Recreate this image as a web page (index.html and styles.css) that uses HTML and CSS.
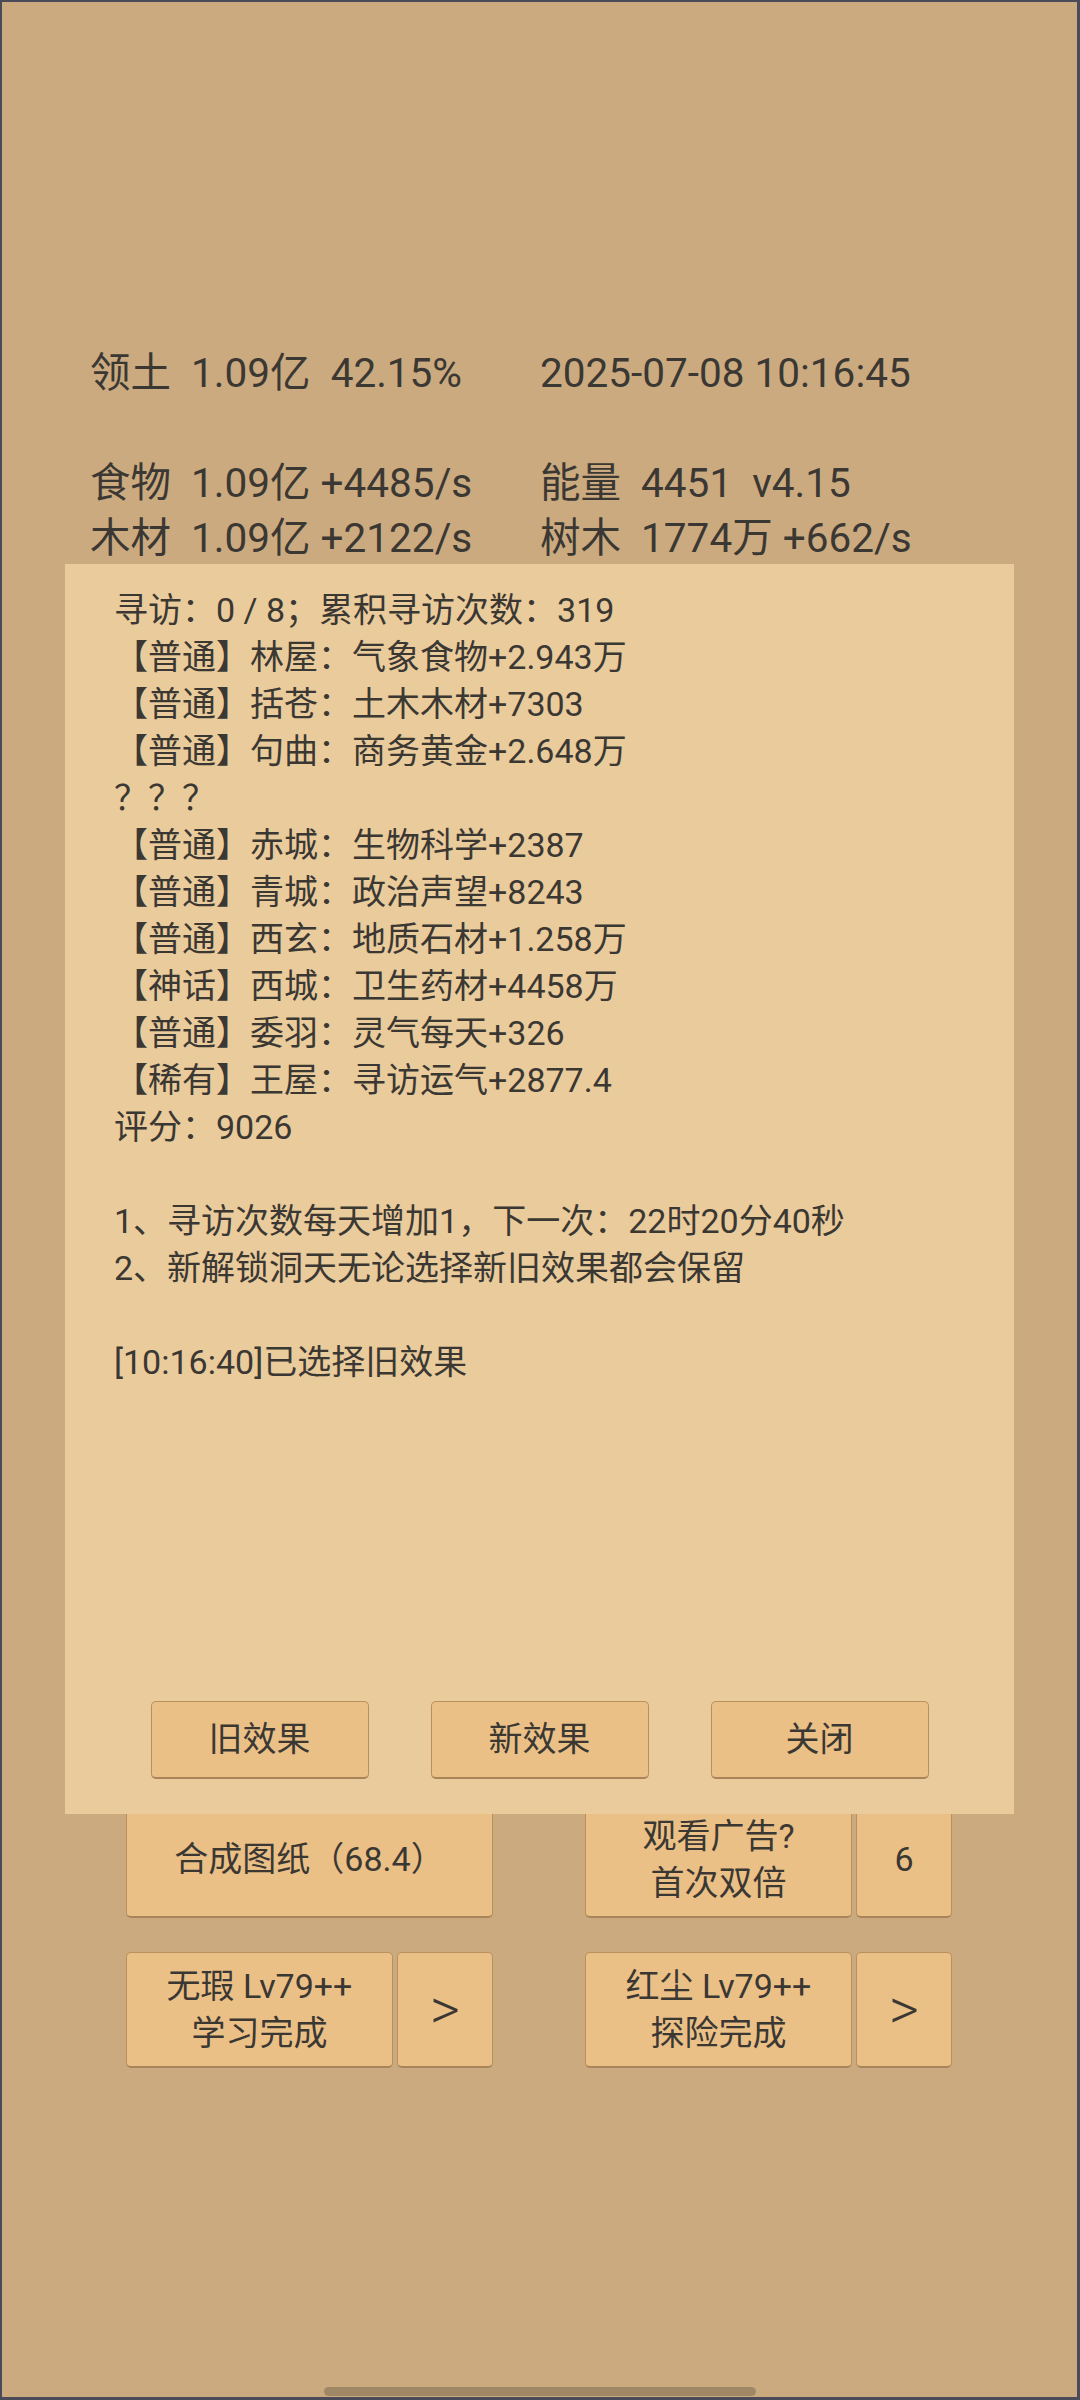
FILE: index.html
```html
<!DOCTYPE html>
<html>

<head>
    <title>洞天</title>
    <meta charset="utf-8">
    <link rel="stylesheet" href="styles.css">
</head>

<body>
    <div id='screen'>
        <div class='stats'>
            <div class='stat-row'>
                <span class='stat'>领土  1.09亿  42.15%</span>
                <span class='stat'>2025-07-08 10:16:45</span>
            </div>
            <div class='stat-row'></div>
            <div class='stat-row'>
                <span class='stat'>食物  1.09亿 +4485/s</span>
                <span class='stat'>能量  4451  v4.15</span>
            </div>
            <div class='stat-row'>
                <span class='stat'>木材  1.09亿 +2122/s</span>
                <span class='stat'>树木  1774万 +662/s</span>
            </div>
        </div>

        <div class='actions'>
            <div class='action-row'>
                <div class='group'>
                    <button class='btn wide'>合成图纸（68.4）</button>
                </div>
                <div class='group'>
                    <button class='btn main'>观看广告?<br>首次双倍</button>
                    <button class='btn side'>6</button>
                </div>
            </div>
            <div class='action-row'>
                <div class='group'>
                    <button class='btn main'>无瑕 Lv79++<br>学习完成</button>
                    <button class='btn side arrow'>&gt;</button>
                </div>
                <div class='group'>
                    <button class='btn main'>红尘 Lv79++<br>探险完成</button>
                    <button class='btn side arrow'>&gt;</button>
                </div>
            </div>
        </div>

        <!-- visit dialog -->
        <div class='dialog'>
            <div class='log'>
                <div>寻访：0 / 8；累积寻访次数：319</div>
                <div>【普通】林屋：气象食物+2.943万</div>
                <div>【普通】括苍：土木木材+7303</div>
                <div>【普通】句曲：商务黄金+2.648万</div>
                <div>？？？</div>
                <div>【普通】赤城：生物科学+2387</div>
                <div>【普通】青城：政治声望+8243</div>
                <div>【普通】西玄：地质石材+1.258万</div>
                <div>【神话】西城：卫生药材+4458万</div>
                <div>【普通】委羽：灵气每天+326</div>
                <div>【稀有】王屋：寻访运气+2877.4</div>
                <div>评分：9026</div>
                <div class='blank'></div>
                <div>1、寻访次数每天增加1，下一次：22时20分40秒</div>
                <div>2、新解锁洞天无论选择新旧效果都会保留</div>
                <div class='blank'></div>
                <div>[10:16:40]已选择旧效果</div>
            </div>
            <div class='dialog-buttons'>
                <button class='btn choice'>旧效果</button>
                <button class='btn choice'>新效果</button>
                <button class='btn choice'>关闭</button>
            </div>
        </div>

        <div class='home-bar'></div>
    </div>
</body>

</html>
```

FILE: styles.css
```css
* {
    box-sizing: border-box;
}

body {
    margin: 0;
    font-family: Roboto, "Noto Sans CJK SC", sans-serif;
    color: #3b3833;
}

#screen {
    position: relative;
    width: 1080px;
    height: 2400px;
    background-color: #cbaa80;
    border: 2px solid #4b4a58;
    border-right-width: 3px;
    border-bottom-width: 3px;
    overflow: hidden;
}

/* resource lines at the top */
.stats {
    padding: 344px 0 0 88px;
    font-size: 40.5px;
}

.stat-row {
    display: flex;
    height: 55px;
    line-height: 55px;
}

.stat {
    width: 450px;
    white-space: pre;
}

/* main action buttons */
.actions {
    display: flex;
    flex-direction: column;
    gap: 34px;
    margin-top: 1236px;
}

.action-row {
    display: flex;
    justify-content: center;
    gap: 92px;
    margin-left: -1px;
}

.group {
    display: flex;
    gap: 4px;
    width: 367px;
    height: 116px;
}

.btn {
    font-family: Roboto, "Noto Sans CJK SC", sans-serif;
    font-size: 34px;
    line-height: 47px;
    color: #3b3833;
    background-color: #ebc087;
    border: 1px solid #b8905c;
    border-bottom: 2px solid #a9845a;
    border-radius: 5px;
    padding: 0;
}

.btn.wide {
    width: 100%;
}

.btn.main {
    width: 267px;
}

.btn.side {
    width: 96px;
}

.btn.arrow {
    font-size: 58px;
    font-weight: 300;
}

/* dialog */
.dialog {
    position: absolute;
    left: 63px;
    top: 562px;
    width: 949px;
    height: 1250px;
    background-color: #eacb9c;
    display: flex;
    flex-direction: column;
}

.log {
    flex: 1;
    padding: 23px 0 0 49px;
    font-size: 34px;
    line-height: 47px;
}

.log .blank {
    height: 47px;
}

.dialog-buttons {
    display: flex;
    justify-content: center;
    gap: 62px;
    padding-bottom: 35px;
}

.btn.choice {
    width: 218px;
    height: 78px;
}

.home-bar {
    position: absolute;
    left: 322px;
    bottom: 1px;
    width: 432px;
    height: 9px;
    border-radius: 5px;
    background-color: #a08867;
}
```
